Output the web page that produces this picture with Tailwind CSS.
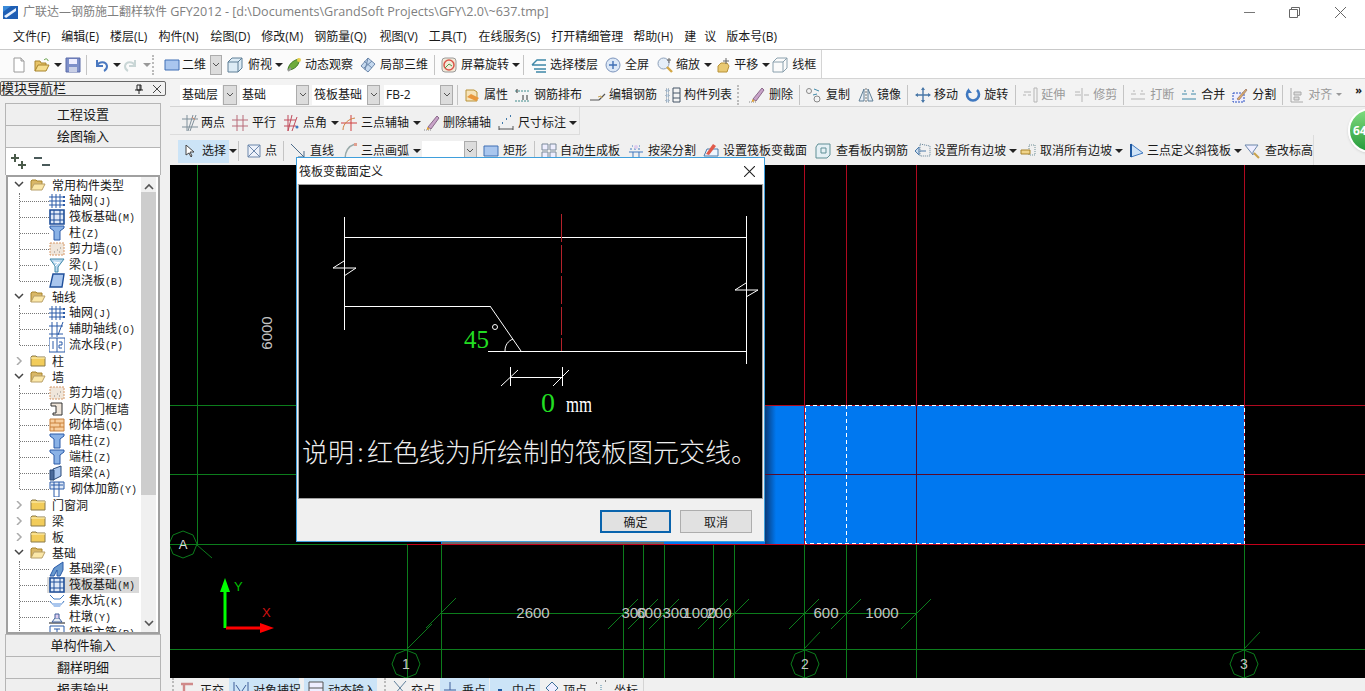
<!DOCTYPE html>
<html lang="zh">
<head>
    <meta charset="UTF-8">
    <title>GFY2012</title>
    <script src="https://cdn.jsdelivr.net/npm/@tailwindcss/browser@4"></script>
</head>
<body class="m-0 overflow-hidden bg-white">
<!-- icon sheet -->
<svg class="hidden" xmlns="http://www.w3.org/2000/svg">
    <symbol id="new" viewBox="0 0 16 16"><path d="M3 1h7l3 3v11H3z" fill="#fff" stroke="#9a9a9a"/><path d="M10 1v3h3" fill="#ddd" stroke="#9a9a9a"/></symbol>
    <symbol id="open" viewBox="0 0 16 16"><path d="M1 14V4h5l1 2h5v2" fill="#e8c468" stroke="#a8842c"/><path d="M1 14l3-6h11l-3 6z" fill="#f6dd8d" stroke="#a8842c"/><path d="M10 3c2-2 4-1 4 1" fill="none" stroke="#5a9a3a"/></symbol>
    <symbol id="save" viewBox="0 0 16 16"><path d="M1 1h14v14H1z" fill="#7d8fc9" stroke="#5a6aa8"/><path d="M4 2h8v5H4z" fill="#eef"/><path d="M4 10h8v5H4z" fill="#c9cfe6"/></symbol>
    <symbol id="undo" viewBox="0 0 16 16"><path d="M3 3v6h6" fill="none" stroke="#4a78c0" stroke-width="2"/><path d="M3 9c2-5 9-5 10 0 0 2-1 4-3 5" fill="none" stroke="#4a78c0" stroke-width="2"/></symbol>
    <symbol id="redo" viewBox="0 0 16 16"><path d="M13 3v6H7" fill="none" stroke="#c9d6d6" stroke-width="2"/><path d="M13 9C11 4 4 4 3 9c0 2 1 4 3 5" fill="none" stroke="#c9d6d6" stroke-width="2"/></symbol>
    <symbol id="rect" viewBox="0 0 16 16"><path d="M1 3h14v10H1z" fill="#a9c6ee" stroke="#3f6fb5"/></symbol>
    <symbol id="cube" viewBox="0 0 16 16"><path d="M1 5l4-4h10v10l-4 4H1z" fill="#dcebf5" stroke="#5f7f96"/><path d="M1 5h10v10M11 5l4-4" fill="none" stroke="#5f7f96"/></symbol>
    <symbol id="orbit" viewBox="0 0 16 16"><path d="M2 13c0-5 5-10 11-11 1 5-4 11-11 11z" fill="#6eab3c" stroke="#3f7a25"/><circle cx="13" cy="3" r="2" fill="#e8d04c"/><path d="M2 14l3-3" stroke="#999" stroke-width="2"/></symbol>
    <symbol id="part3d" viewBox="0 0 16 16"><path d="M8 1l7 6-7 8-7-6z" fill="#c5d9ef" stroke="#6b87ab"/><path d="M4 4l8 7M8 1l-3 12M12 4l-8 7" stroke="#6b87ab" fill="none"/></symbol>
    <symbol id="spin" viewBox="0 0 16 16"><rect x="1" y="1" width="14" height="14" rx="3" fill="#f3ead9" stroke="#9a9a9a"/><circle cx="8" cy="8" r="5" fill="none" stroke="#d9564a" stroke-width="1.5"/><path d="M4 11l4-4 3 2" stroke="#4a9a4a" fill="none"/></symbol>
    <symbol id="floors" viewBox="0 0 16 16"><path d="M1 8l5-5h9M1 8h14M3 12h12M5 15h10" fill="none" stroke="#3f88a8" stroke-width="1.4"/></symbol>
    <symbol id="full" viewBox="0 0 16 16"><circle cx="8" cy="8" r="7" fill="#dce8f7" stroke="#7d95bd"/><path d="M8 4v8M4 8h8" stroke="#3f6fb5" stroke-width="1.4"/></symbol>
    <symbol id="zoom" viewBox="0 0 16 16"><circle cx="6.500" cy="6.500" r="5.500" fill="#e5eef8" stroke="#8ea1ba"/><path d="M10 10l5 5" stroke="#d3a745" stroke-width="2.400"/><path d="M12 1v5M10 3h4" stroke="#666"/></symbol>
    <symbol id="pan" viewBox="0 0 16 16"><path d="M3 15V9l3-3h6l2 3-2 6z" fill="#e9c972" stroke="#b89238"/><path d="M11 1v6M8 4h6" stroke="#666"/></symbol>
    <symbol id="wire" viewBox="0 0 16 16"><path d="M1 5l4-4h10v10l-4 4H1zM1 5h10v10M11 5l4-4" fill="none" stroke="#8aa0ad"/></symbol>
    <symbol id="prop" viewBox="0 0 16 16"><path d="M1 3h8l3 2v9H1z" fill="#f6e3b8" stroke="#b89238"/><path d="M2 10l4-3 8 4-3 3z" fill="#e9973c"/></symbol>
    <symbol id="bars" viewBox="0 0 16 16"><path d="M1 4h14M1 14h14" stroke="#3f8a8a" stroke-dasharray="2 1"/><path d="M3 2v4M9 8v5M13 8v5" stroke="#333"/></symbol>
    <symbol id="edit" viewBox="0 0 16 16"><path d="M0 13h9M9 13l6-6" stroke="#555" stroke-width="1.200" fill="none"/><path d="M8 10l3-1 1 2" stroke="#c9a24c" fill="none"/></symbol>
    <symbol id="list" viewBox="0 0 16 16"><path d="M1 2h3v3H1zM1 7h3v3H1zM1 12h3v3H1z" fill="#cde" stroke="#789" stroke-dasharray="1 1"/><path d="M8 1h7v14H8zM8 6h7M8 11h7" fill="none" stroke="#456"/></symbol>
    <symbol id="erase" viewBox="0 0 16 16"><path d="M4 12L13 1l2 2-8 11z" fill="#c8a3c8" stroke="#8a6a8a"/><path d="M0 15h7" stroke="#888" stroke-dasharray="1 1"/><path d="M3 12l3 2-3 1z" fill="#e0a030"/></symbol>
    <symbol id="copy" viewBox="0 0 16 16"><circle cx="3" cy="4" r="2.500" fill="none" stroke="#888"/><circle cx="11" cy="12" r="3" fill="none" stroke="#888"/><path d="M8 2l5 2M7 8l4-1" stroke="#3f88a8"/></symbol>
    <symbol id="mirror" viewBox="0 0 16 16"><path d="M8 1v14" stroke="#777" stroke-dasharray="2 1"/><path d="M6 2v12H1zM10 2v12h5z" fill="#e8eef5" stroke="#5f7f96"/></symbol>
    <symbol id="move" viewBox="0 0 16 16"><path d="M8 1v14M1 8h14" stroke="#4a78a8" stroke-width="1.400"/><path d="M8 0l2 3H6zM8 16l2-3H6zM0 8l3-2v4zM16 8l-3-2v4z" fill="#4a78a8"/></symbol>
    <symbol id="rotate" viewBox="0 0 16 16"><path d="M4 3a6 6 0 1 0 8 0" fill="none" stroke="#3f78c0" stroke-width="2.600"/><path d="M3 1v5h4" fill="#3f78c0"/></symbol>
    <symbol id="extend" viewBox="0 0 16 16"><path d="M1 8h3M6 8h3M2 5h7M12 1v14h3V1z" fill="none" stroke="#b5b5b5"/></symbol>
    <symbol id="trim" viewBox="0 0 16 16"><path d="M1 8h6M10 8h5M1 5h5M8 1v14" fill="none" stroke="#b5b5b5"/></symbol>
    <symbol id="break" viewBox="0 0 16 16"><path d="M1 12h14M1 7h5M10 7h5M3 4h2M11 4h2" stroke="#b5b5b5" fill="none"/></symbol>
    <symbol id="merge" viewBox="0 0 16 16"><path d="M1 12h14M1 7h5M10 7h5M3 4h2M11 4h2" stroke="#3f88a8" fill="none"/></symbol>
    <symbol id="split" viewBox="0 0 16 16"><path d="M1 6h11v9H1z" fill="#eef" stroke="#2a50c0" stroke-dasharray="2 1"/><path d="M5 12L14 2l1 1-8 10z" fill="#e0b060" stroke="#a87"/></symbol>
    <symbol id="align" viewBox="0 0 16 16"><path d="M2 1v14h12" stroke="#aaa" fill="none"/><path d="M5 5h7v3H5zM5 10h5v3H5z" fill="#ddd" stroke="#aaa"/></symbol>
    <symbol id="two" viewBox="0 0 16 16"><path d="M0 4h16M0 12h16M5 0v16M11 0l-5 16M14 0l-6 16" stroke="#7f8f9a" fill="none"/><path d="M10 2l3 3" stroke="#d08a6a"/></symbol>
    <symbol id="para" viewBox="0 0 16 16"><path d="M0 5h16M0 11h16M5 0v16M11 0v16" stroke="#b86a78" fill="none"/></symbol>
    <symbol id="angle" viewBox="0 0 16 16"><path d="M0 5h12M0 11h12M4 0v16M8 0L4 16M13 2L8 16" stroke="#c04a5a" fill="none"/><circle cx="13" cy="12" r="1.500" fill="#3f78c0"/></symbol>
    <symbol id="arc" viewBox="0 0 16 16"><path d="M0 8h16M10 0v16" stroke="#d04040"/><path d="M2 15c0-6 5-11 12-12" stroke="#d08040" fill="none"/></symbol>
    <symbol id="dim" viewBox="0 0 16 16"><path d="M1 11v4M15 11v4M1 14h14" stroke="#555" fill="none"/><path d="M4 8h1M8 4h1M12 1h1" stroke="#3f78a8" stroke-width="2"/></symbol>
    <symbol id="point" viewBox="0 0 16 16"><path d="M2 2h12v12H2zM2 2l12 12M14 2L2 14" fill="#eef2fa" stroke="#6b87ab"/></symbol>
    <symbol id="line" viewBox="0 0 16 16"><path d="M1 1l13 13M14 8v6H8" stroke="#4a6a8a" fill="none"/></symbol>
    <symbol id="arc2" viewBox="0 0 16 16"><path d="M3 16C3 8 7 3 13 1" stroke="#9aa" stroke-width="1.500" fill="none"/><path d="M12 0h3v3h-3z" fill="#e0a090"/></symbol>
    <symbol id="auto" viewBox="0 0 16 16"><path d="M1 1h6v6H1zM9 1h6v6H9zM1 9h6v6H1zM9 9h6v6H9z" fill="#eef" stroke="#7a8a9a"/></symbol>
    <symbol id="beamcut" viewBox="0 0 16 16"><path d="M1 9h14M5 15V9M11 15V9" stroke="#3f78c0" fill="none"/><path d="M4 3h1M11 3h1M2 6h12" stroke="#3f78c0" stroke-dasharray="2 2"/><circle cx="8" cy="4" r="2" fill="#dce"/></symbol>
    <symbol id="cutsec" viewBox="0 0 16 16"><path d="M4 6h11v7H1z" fill="#eef6ff" stroke="#4a78a8"/><path d="M3 11l7-10 3 2-7 9z" fill="#e05a4a"/></symbol>
    <symbol id="viewbar" viewBox="0 0 16 16"><path d="M3 1h12v11l-3 3H1V4z" fill="#e5f0f5" stroke="#5f8f96"/><path d="M6 5h5v5H6z" fill="none" stroke="#5f8f96"/></symbol>
    <symbol id="slope" viewBox="0 0 16 16"><path d="M5 1l10 2v10H5z" fill="none" stroke="#5f7f96" stroke-dasharray="1 1"/><path d="M0 8l4-4v8zM5 8h6" fill="#cde" stroke="#4a78a8"/></symbol>
    <symbol id="unslope" viewBox="0 0 16 16"><path d="M9 2h6v10H9z" fill="none" stroke="#6f8f96" stroke-dasharray="1 1"/><path d="M1 7h9v4H1z" fill="#f0d48a" stroke="#a8842c"/></symbol>
    <symbol id="tri" viewBox="0 0 16 16"><path d="M3 1v13l12-4z" fill="#cfe3f7" stroke="#3f78c0"/><path d="M3 1v13" stroke="#1f58a0" stroke-width="2"/></symbol>
    <symbol id="elev" viewBox="0 0 16 16"><path d="M1 2h13L9 9v3z" fill="#eef" stroke="#6b87ab"/><path d="M10 10l5 5" stroke="#c9a24c" stroke-width="2"/></symbol>
    <symbol id="ortho" viewBox="0 0 16 16"><path d="M2 4h12M5 4v12" stroke="#d08a8a" stroke-width="2.400" fill="none"/></symbol>
    <symbol id="snap" viewBox="0 0 16 16"><path d="M1 2v14M15 2v14M3 5l4 6M13 5l-4 6" stroke="#3f5f9a" fill="none"/></symbol>
    <symbol id="dyn" viewBox="0 0 16 16"><path d="M1 2h14v14H1zM1 8h14" fill="#eef" stroke="#555"/></symbol>
    <symbol id="cross" viewBox="0 0 16 16"><path d="M2 1l12 14M14 1L2 15" stroke="#5f7f9a" fill="none"/></symbol>
    <symbol id="perp" viewBox="0 0 16 16"><path d="M8 2v8M2 10h12" stroke="#3f5f9a" fill="none"/></symbol>
    <symbol id="mid" viewBox="0 0 16 16"><path d="M6 9h4v4H6z" fill="#1f58a0"/></symbol>
    <symbol id="vert" viewBox="0 0 16 16"><path d="M8 2l6 6-6 6-6-6z" fill="#eef" stroke="#3f6f9a"/></symbol>
    <symbol id="coord" viewBox="0 0 16 16"><path d="M1 13h14M8 5v10" stroke="#4a88a8" stroke-dasharray="1 1"/><path d="M3 3h1M12 1h1" stroke="#888" stroke-width="2"/></symbol>
    <symbol id="folder-o" viewBox="0 0 16 16"><path d="M1 13V4l1-1h4l1 1h5v3" fill="#d9b767" stroke="#a8842c"/><path d="M1 13l3-6h11l-3 6z" fill="#fbe7a8" stroke="#b8a06a"/></symbol>
    <symbol id="folder-c" viewBox="0 0 16 16"><path d="M1 13V4l1-1h4l1 1h8v9z" fill="#f2cc5a" stroke="#8a7a4a"/><path d="M1 5h14" stroke="#fff3c0"/></symbol>
    <symbol id="t-grid" viewBox="0 0 16 16"><path d="M0 4h16M0 8h16M0 12h16M3 1v14M7 1v14M11 1v14" stroke="#2a5aa8" fill="none"/><path d="M14 3h2v2h-2zM14 7h2v2h-2zM14 11h2v2h-2z" fill="#2a5aa8"/></symbol>
    <symbol id="t-raft" viewBox="0 0 16 16"><path d="M1 1h14v14H1z" fill="#dfe9f7" stroke="#1f4f9a" stroke-width="1.600"/><path d="M5 1v14M11 1v14M1 5h14M1 11h14" stroke="#1f4f9a"/></symbol>
    <symbol id="t-col" viewBox="0 0 16 16"><path d="M1 1h14v2l-4 3v9H5V6L1 3z" fill="#8ab2e6" stroke="#2a5aa8"/></symbol>
    <symbol id="t-wall" viewBox="0 0 16 16"><path d="M1 2h14v12H1z" fill="#f0e6da" stroke="#d69a6a" stroke-dasharray="2 1"/><path d="M8 9l1 0M5 11h1M11 7h1M10 11h1" stroke="#888"/></symbol>
    <symbol id="t-beam" viewBox="0 0 16 16"><path d="M1 2h14L9 10v5H6V9z" fill="#bcd9f0" stroke="#3f88a8"/><path d="M5 5l6 1M6 9l4-4" stroke="#fff"/></symbol>
    <symbol id="t-slab" viewBox="0 0 16 16"><path d="M4 1h11l-2 13H1z" fill="#a9c6ee" stroke="#1f4f9a" stroke-width="1.400"/></symbol>
    <symbol id="t-aux" viewBox="0 0 16 16"><path d="M0 5h14M0 13h14M3 1v15M8 1v15M14 1L9 14" stroke="#2a5aa8" fill="none"/></symbol>
    <symbol id="t-flow" viewBox="0 0 16 16"><path d="M0 1h16v14H0zM8 1v14" fill="#fff" stroke="#2a5aa8"/><path d="M4 4v8M10 5h3v3h-3v3h3" stroke="#2a5aa8" fill="none"/></symbol>
    <symbol id="t-door" viewBox="0 0 16 16"><path d="M2 2h11v12H4v-2h3V5H2z" fill="#f0e6da" stroke="#333"/></symbol>
    <symbol id="t-brick" viewBox="0 0 16 16"><path d="M1 2h14v12H1z" fill="#f7cf9f" stroke="#c8803a"/><path d="M1 6h14M1 10h14M6 2v4M11 6v4M5 10v4" stroke="#c8803a"/></symbol>
    <symbol id="t-dark" viewBox="0 0 16 16"><path d="M4 4l8-3v10l-8 4z" fill="#a9c6ee" stroke="#2a4a78"/><path d="M1 5h4v10H1z" fill="#4a6a9a" stroke="#2a4a78"/></symbol>
    <symbol id="t-rein" viewBox="0 0 16 16"><path d="M1 1h14v7H1z" fill="#dfe9f7" stroke="#2a5aa8"/><path d="M5 1v15h5V1M2 4h12" stroke="#2a5aa8" fill="none"/></symbol>
    <symbol id="t-fbeam" viewBox="0 0 16 16"><path d="M1 15l4-8 9-6v8l-3 6H8V9l-3 6z" fill="#6a9ad0" stroke="#2a5aa8"/></symbol>
    <symbol id="t-pit" viewBox="0 0 16 16"><path d="M1 2l4 4h6l4-4M1 8c3 6 11 6 14 0" stroke="#3f78c0" fill="none"/><path d="M3 10h10l-2 4H5z" fill="#a9c6ee"/></symbol>
    <symbol id="t-pier" viewBox="0 0 16 16"><path d="M0 13h16v2H0z" fill="#8a8a8a"/><path d="M3 13l3-4h4l3 4z" fill="#e8eef5" stroke="#3f5f9a"/><path d="M6 9V5h4v4" fill="#dce" stroke="#3f5f9a"/></symbol>
    <symbol id="t-bar" viewBox="0 0 16 16"><path d="M1 1h14v14H1z" fill="#fff" stroke="#2a5aa8"/><path d="M5 4h6M8 4v8" stroke="#2a5aa8"/></symbol>
</svg>

<div class="relative h-[691px] w-[1365px] overflow-hidden flex flex-col text-[12px] text-[#1a1a1a] font-['Open_Sans','Noto_Sans_CJK_SC',sans-serif]">
    <!-- title bar -->
    <div class="h-6 shrink-0 flex items-center pl-[3px] bg-white">
        <svg class="w-[15px] h-[15px]" viewBox="0 0 15 15"><path d="M0 1h15v13H0z" fill="#1f5fb5"/><path d="M1 11L13 3v3L3 13z" fill="#e8f2ff"/><path d="M0 1h8L0 7z" fill="#3a8ad9"/></svg>
        <span class="ml-[5px] text-[12px] text-[#7f7f7f] whitespace-nowrap">广联达—钢筋施工翻样软件 <span class="text-[12.600px]">GFY2012 - [d:\Documents\GrandSoft Projects\GFY\2.0\~637.tmp]</span></span>
        <div class="ml-auto flex items-center">
            <svg class="w-[11px] h-[11px]" viewBox="0 0 11 11"><path d="M0 5.500h11" stroke="#777"/></svg>
            <svg class="ml-[34px] w-[11px] h-[11px]" viewBox="0 0 11 11"><path d="M.5 2.500h8v8h-8zM2.500 2.500v-2h8v8h-2" fill="none" stroke="#666"/></svg>
            <svg class="ml-[35px] mr-[19px] w-[11px] h-[11px]" viewBox="0 0 11 11"><path d="M0 0l11 11M11 0L0 11" stroke="#666"/></svg>
        </div>
    </div>
    <!-- menu bar -->
    <div class="h-[26px] shrink-0 border-b border-[#c9c9c9] flex items-center whitespace-nowrap bg-white">
        <span class="ml-[13px]">文件(F)</span><span class="ml-[11px]">编辑(E)</span><span class="ml-[11px]">楼层(L)</span><span class="ml-[11px]">构件(N)</span><span class="ml-[12px]">绘图(D)</span><span class="ml-[11px]">修改(M)</span><span class="ml-[11px]">钢筋量(Q)</span><span class="ml-[13px]">视图(V)</span><span class="ml-[11px]">工具(T)</span><span class="ml-[12px]">在线服务(S)</span><span class="ml-[11px]">打开精细管理</span><span class="ml-[10px]">帮助(H)</span><span class="ml-[11px]">建</span><span class="ml-2">议</span><span class="ml-[10px]">版本号(B)</span>
    </div>
    <!-- toolbar 1 -->
    <div class="h-[29px] shrink-0 flex items-center whitespace-nowrap border-b border-[#d4d4d4] bg-white">
        <div class="h-full w-[822px] pt-[2px] flex items-center border-r border-[#d4d4d4] bg-[#fbfbfb]">
            <svg class="ml-[11px] w-4 h-4"><use href="#new"/></svg>
            <svg class="ml-[7px] w-4 h-4"><use href="#open"/></svg>
            <i class="ml-1 border-x-4 border-t-4 border-x-transparent border-t-[#222]"></i>
            <svg class="ml-[3px] w-4 h-4"><use href="#save"/></svg>
            <i class="ml-[5px] w-px h-5 bg-[#c4c4c4]"></i>
            <svg class="ml-[7px] w-4 h-4"><use href="#undo"/></svg>
            <i class="ml-[3px] border-x-4 border-t-4 border-x-transparent border-t-[#222]"></i>
            <svg class="ml-px w-4 h-4"><use href="#redo"/></svg>
            <i class="ml-[5px] border-x-4 border-t-4 border-x-transparent border-t-[#999]"></i>
            <i class="ml-px w-[2px] h-5 border-l-2 border-dotted border-[#bbb]"></i>
            <svg class="ml-[10px] w-4 h-4"><use href="#rect"/></svg>
            <span class="ml-[2px]">二维</span>
            <span class="ml-1 w-3 h-5 flex items-center justify-center bg-[#dcdcdc] border border-[#acacac]"><svg class="w-2 h-2" viewBox="0 0 8 8"><path d="M1 2l3 3 3-3" fill="none" stroke="#555"/></svg></span>
            <svg class="ml-[5px] w-4 h-4"><use href="#cube"/></svg>
            <span class="ml-[5px]">俯视</span>
            <i class="ml-[3px] border-x-4 border-t-4 border-x-transparent border-t-[#222]"></i>
            <svg class="ml-[3px] w-4 h-4"><use href="#orbit"/></svg>
            <span class="ml-[3px]">动态观察</span>
            <svg class="ml-[7px] w-4 h-4"><use href="#part3d"/></svg>
            <span class="ml-1">局部三维</span>
            <i class="ml-[6px] w-px h-5 bg-[#c4c4c4]"></i>
            <svg class="ml-[6px] w-4 h-4"><use href="#spin"/></svg>
            <span class="ml-1">屏幕旋转</span>
            <i class="ml-[3px] border-x-4 border-t-4 border-x-transparent border-t-[#222]"></i>
            <i class="ml-[3px] w-px h-5 bg-[#c4c4c4]"></i>
            <svg class="ml-[7px] w-4 h-4"><use href="#floors"/></svg>
            <span class="ml-[3px]">选择楼层</span>
            <svg class="ml-[7px] w-4 h-4"><use href="#full"/></svg>
            <span class="ml-1">全屏</span>
            <svg class="ml-2 w-4 h-4"><use href="#zoom"/></svg>
            <span class="ml-[3px]">缩放</span>
            <i class="ml-1 border-x-4 border-t-4 border-x-transparent border-t-[#222]"></i>
            <svg class="ml-[3px] w-4 h-4"><use href="#pan"/></svg>
            <span class="ml-[3px]">平移</span>
            <i class="ml-1 border-x-4 border-t-4 border-x-transparent border-t-[#222]"></i>
            <svg class="ml-[2px] w-4 h-4"><use href="#wire"/></svg>
            <span class="ml-1">线框</span>
        </div>
    </div>

    <div class="flex-1 flex min-h-0">
        <!-- module navigator -->
        <aside class="w-[170px] shrink-0 bg-[#f0f0f0] flex flex-col overflow-hidden">
            <div class="mt-[2px] h-[15px] w-[166px] shrink-0 flex items-center border border-[#666] rounded-[2px] text-[13px] whitespace-nowrap">
                <span>模块导航栏</span>
                <svg class="ml-auto w-[10px] h-[10px]" viewBox="0 0 10 10"><path d="M3 1h4v5H3zM1 6h8M5 6v4M6 1v5" fill="none" stroke="#222"/></svg>
                <svg class="ml-[9px] mr-[4px] w-[8px] h-[8px]" viewBox="0 0 8 8"><path d="M0 0l8 8M8 0L0 8" stroke="#444"/></svg>
            </div>
            <div class="ml-[5px] mt-[7px] w-[156px] h-[23px] shrink-0 flex items-center justify-center border border-[#b5b5b5] bg-[#efefef] text-[13px]">工程设置</div>
            <div class="ml-[5px] w-[156px] h-[22px] pt-px shrink-0 flex items-center justify-center border border-t-0 border-[#b5b5b5] bg-[#efefef] text-[13px]">绘图输入</div>
            <div class="ml-[5px] w-[156px] h-[27px] shrink-0 flex items-center bg-white border-x border-[#b5b5b5]">
                <svg class="ml-[5px] w-4 h-4" viewBox="0 0 16 16"><path d="M4 0v8M0 4h8M11 7v8M7 11h8" stroke="#4a5a4a" stroke-width="2"/></svg>
                <svg class="ml-[7px] w-4 h-4" viewBox="0 0 16 16"><path d="M0 4h8M8 11h8" stroke="#4a5a5a" stroke-width="2"/></svg>
            </div>
            <!-- tree -->
            <div class="ml-[6px] w-[154px] h-[459px] shrink-0 relative bg-white border-2 border-[#a0a0a0] overflow-hidden">
                <div class="absolute right-[2px] top-0 bottom-0 w-[15px] bg-[#f0f0f0]">
                    <svg class="mx-auto mt-[6px] w-[10px] h-[7px]" viewBox="0 0 10 7"><path d="M1 6l4-4 4 4" fill="none" stroke="#555" stroke-width="1.600"/></svg>
                    <div class="mt-[2px] h-[303px] bg-[#cdcdcd]"></div>
                    <svg class="absolute left-[3px] bottom-[5px] w-[10px] h-[7px]" viewBox="0 0 10 7"><path d="M1 1l4 4 4-4" fill="none" stroke="#555" stroke-width="1.600"/></svg>
                </div>
                <div class="w-[150px] -ml-[8px] font-['Noto_Sans_CJK_SC',sans-serif] leading-4 whitespace-nowrap">
                    <!-- 常用构件类型 -->
                    <div class="relative">
                        <i class="absolute left-[19px] top-4 bottom-2 border-l border-dotted border-[#777]"></i>
                        <div class="h-4 flex items-center"><svg class="ml-[14px] w-[10px] h-2" viewBox="0 0 10 8"><path d="M1 1l4 4 4-4" fill="none" stroke="#444" stroke-width="1.500"/></svg><svg class="ml-[6px] w-4 h-4"><use href="#folder-o"/></svg><span class="ml-[6px]">常用构件类型</span></div>
                        <div class="h-4 flex items-center pl-5"><i class="w-[29px] border-b border-dotted border-[#777]"></i><svg class="w-4 h-4"><use href="#t-grid"/></svg><span class="ml-1">轴网<span class="font-['Liberation_Mono'] text-[10px]">(J)</span></span></div>
                        <div class="h-4 flex items-center pl-5"><i class="w-[29px] border-b border-dotted border-[#777]"></i><svg class="w-4 h-4"><use href="#t-raft"/></svg><span class="ml-1">筏板基础<span class="font-['Liberation_Mono'] text-[10px]">(M)</span></span></div>
                        <div class="h-4 flex items-center pl-5"><i class="w-[29px] border-b border-dotted border-[#777]"></i><svg class="w-4 h-4"><use href="#t-col"/></svg><span class="ml-1">柱<span class="font-['Liberation_Mono'] text-[10px]">(Z)</span></span></div>
                        <div class="h-4 flex items-center pl-5"><i class="w-[29px] border-b border-dotted border-[#777]"></i><svg class="w-4 h-4"><use href="#t-wall"/></svg><span class="ml-1">剪力墙<span class="font-['Liberation_Mono'] text-[10px]">(Q)</span></span></div>
                        <div class="h-4 flex items-center pl-5"><i class="w-[29px] border-b border-dotted border-[#777]"></i><svg class="w-4 h-4"><use href="#t-beam"/></svg><span class="ml-1">梁<span class="font-['Liberation_Mono'] text-[10px]">(L)</span></span></div>
                        <div class="h-4 flex items-center pl-5"><i class="w-[29px] border-b border-dotted border-[#777]"></i><svg class="w-4 h-4"><use href="#t-slab"/></svg><span class="ml-1">现浇板<span class="font-['Liberation_Mono'] text-[10px]">(B)</span></span></div>
                    </div>
                    <!-- 轴线 -->
                    <div class="relative">
                        <i class="absolute left-[19px] top-4 bottom-2 border-l border-dotted border-[#777]"></i>
                        <div class="h-4 flex items-center"><svg class="ml-[14px] w-[10px] h-2" viewBox="0 0 10 8"><path d="M1 1l4 4 4-4" fill="none" stroke="#444" stroke-width="1.500"/></svg><svg class="ml-[6px] w-4 h-4"><use href="#folder-o"/></svg><span class="ml-[6px]">轴线</span></div>
                        <div class="h-4 flex items-center pl-5"><i class="w-[29px] border-b border-dotted border-[#777]"></i><svg class="w-4 h-4"><use href="#t-grid"/></svg><span class="ml-1">轴网<span class="font-['Liberation_Mono'] text-[10px]">(J)</span></span></div>
                        <div class="h-4 flex items-center pl-5"><i class="w-[29px] border-b border-dotted border-[#777]"></i><svg class="w-4 h-4"><use href="#t-aux"/></svg><span class="ml-1">辅助轴线<span class="font-['Liberation_Mono'] text-[10px]">(O)</span></span></div>
                        <div class="h-4 flex items-center pl-5"><i class="w-[29px] border-b border-dotted border-[#777]"></i><svg class="w-4 h-4"><use href="#t-flow"/></svg><span class="ml-1">流水段<span class="font-['Liberation_Mono'] text-[10px]">(P)</span></span></div>
                    </div>
                    <div class="h-4 flex items-center"><svg class="ml-[14px] w-[10px] h-2" viewBox="0 0 10 8"><path d="M3 0l4 4-4 4" fill="none" stroke="#aaa" stroke-width="1.500"/></svg><svg class="ml-[6px] w-4 h-4"><use href="#folder-c"/></svg><span class="ml-[6px]">柱</span></div>
                    <!-- 墙 -->
                    <div class="relative">
                        <i class="absolute left-[19px] top-4 bottom-2 border-l border-dotted border-[#777]"></i>
                        <div class="h-4 flex items-center"><svg class="ml-[14px] w-[10px] h-2" viewBox="0 0 10 8"><path d="M1 1l4 4 4-4" fill="none" stroke="#444" stroke-width="1.500"/></svg><svg class="ml-[6px] w-4 h-4"><use href="#folder-o"/></svg><span class="ml-[6px]">墙</span></div>
                        <div class="h-4 flex items-center pl-5"><i class="w-[29px] border-b border-dotted border-[#777]"></i><svg class="w-4 h-4"><use href="#t-wall"/></svg><span class="ml-1">剪力墙<span class="font-['Liberation_Mono'] text-[10px]">(Q)</span></span></div>
                        <div class="h-4 flex items-center pl-5"><i class="w-[29px] border-b border-dotted border-[#777]"></i><svg class="w-4 h-4"><use href="#t-door"/></svg><span class="ml-1">人防门框墙</span></div>
                        <div class="h-4 flex items-center pl-5"><i class="w-[29px] border-b border-dotted border-[#777]"></i><svg class="w-4 h-4"><use href="#t-brick"/></svg><span class="ml-1">砌体墙<span class="font-['Liberation_Mono'] text-[10px]">(Q)</span></span></div>
                        <div class="h-4 flex items-center pl-5"><i class="w-[29px] border-b border-dotted border-[#777]"></i><svg class="w-4 h-4"><use href="#t-col"/></svg><span class="ml-1">暗柱<span class="font-['Liberation_Mono'] text-[10px]">(Z)</span></span></div>
                        <div class="h-4 flex items-center pl-5"><i class="w-[29px] border-b border-dotted border-[#777]"></i><svg class="w-4 h-4"><use href="#t-col"/></svg><span class="ml-1">端柱<span class="font-['Liberation_Mono'] text-[10px]">(Z)</span></span></div>
                        <div class="h-4 flex items-center pl-5"><i class="w-[29px] border-b border-dotted border-[#777]"></i><svg class="w-4 h-4"><use href="#t-dark"/></svg><span class="ml-1">暗梁<span class="font-['Liberation_Mono'] text-[10px]">(A)</span></span></div>
                        <div class="h-4 flex items-center pl-5"><i class="w-[29px] border-b border-dotted border-[#777]"></i><svg class="w-4 h-4"><use href="#t-rein"/></svg><span class="ml-[6px]">砌体加筋<span class="font-['Liberation_Mono'] text-[10px]">(Y)</span></span></div>
                    </div>
                    <div class="h-4 flex items-center"><svg class="ml-[14px] w-[10px] h-2" viewBox="0 0 10 8"><path d="M3 0l4 4-4 4" fill="none" stroke="#aaa" stroke-width="1.500"/></svg><svg class="ml-[6px] w-4 h-4"><use href="#folder-c"/></svg><span class="ml-[6px]">门窗洞</span></div>
                    <div class="h-4 flex items-center"><svg class="ml-[14px] w-[10px] h-2" viewBox="0 0 10 8"><path d="M3 0l4 4-4 4" fill="none" stroke="#aaa" stroke-width="1.500"/></svg><svg class="ml-[6px] w-4 h-4"><use href="#folder-c"/></svg><span class="ml-[6px]">梁</span></div>
                    <div class="h-4 flex items-center"><svg class="ml-[14px] w-[10px] h-2" viewBox="0 0 10 8"><path d="M3 0l4 4-4 4" fill="none" stroke="#aaa" stroke-width="1.500"/></svg><svg class="ml-[6px] w-4 h-4"><use href="#folder-c"/></svg><span class="ml-[6px]">板</span></div>
                    <!-- 基础 -->
                    <div class="relative">
                        <i class="absolute left-[19px] top-4 bottom-2 border-l border-dotted border-[#777]"></i>
                        <div class="h-4 flex items-center"><svg class="ml-[14px] w-[10px] h-2" viewBox="0 0 10 8"><path d="M1 1l4 4 4-4" fill="none" stroke="#444" stroke-width="1.500"/></svg><svg class="ml-[6px] w-4 h-4"><use href="#folder-o"/></svg><span class="ml-[6px]">基础</span></div>
                        <div class="h-4 flex items-center pl-5"><i class="w-[29px] border-b border-dotted border-[#777]"></i><svg class="w-4 h-4"><use href="#t-fbeam"/></svg><span class="ml-1">基础梁<span class="font-['Liberation_Mono'] text-[10px]">(F)</span></span></div>
                        <div class="h-4 flex items-center pl-5"><i class="w-[27px] shrink-0 border-b border-dotted border-[#777]"></i><span class="h-4 flex items-center bg-[#d9d9d9] w-[92px] shrink-0 pl-[2px]"><svg class="w-4 h-4 shrink-0"><use href="#t-raft"/></svg><span class="ml-1">筏板基础<span class="font-['Liberation_Mono'] text-[10px]">(M)</span></span></span></div>
                        <div class="h-4 flex items-center pl-5"><i class="w-[29px] border-b border-dotted border-[#777]"></i><svg class="w-4 h-4"><use href="#t-pit"/></svg><span class="ml-1">集水坑<span class="font-['Liberation_Mono'] text-[10px]">(K)</span></span></div>
                        <div class="h-4 flex items-center pl-5"><i class="w-[29px] border-b border-dotted border-[#777]"></i><svg class="w-4 h-4"><use href="#t-pier"/></svg><span class="ml-1">柱墩<span class="font-['Liberation_Mono'] text-[10px]">(Y)</span></span></div>
                        <div class="h-4 flex items-center pl-5"><i class="w-[29px] border-b border-dotted border-[#777]"></i><svg class="w-4 h-4"><use href="#t-bar"/></svg><span class="ml-1">筏板主筋<span class="font-['Liberation_Mono'] text-[10px]">(R)</span></span></div>
                    </div>
                </div>
            </div>
            <div class="ml-[5px] w-[156px] h-[23px] shrink-0 flex items-center justify-center border border-[#b5b5b5] bg-[#efefef] text-[13px]">单构件输入</div>
            <div class="ml-[5px] w-[156px] h-[22px] shrink-0 flex items-center justify-center border border-t-0 border-[#b5b5b5] bg-[#efefef] text-[13px]">翻样明细</div>
            <div class="ml-[5px] w-[156px] h-[22px] shrink-0 flex items-center justify-center border border-t-0 border-[#b5b5b5] bg-[#efefef] text-[13px]">报表输出</div>
        </aside>

        <main class="flex-1 min-w-0 flex flex-col bg-[#f0f0f0]">
            <!-- toolbar 2 -->
            <div class="h-[28px] pt-1 shrink-0 flex items-center whitespace-nowrap border-b border-[#d4d4d4] bg-[#f3f3f3]">
                <span class="ml-[10px] w-[42px] h-5 flex items-center pl-[2px] bg-white">基础层</span>
                <span class="ml-px w-[14px] h-5 flex items-center justify-center bg-[#dcdcdc] border border-[#acacac]"><svg class="w-2 h-2" viewBox="0 0 8 8"><path d="M1 2l3 3 3-3" fill="none" stroke="#555"/></svg></span>
                <span class="ml-[3px] w-[56px] h-5 flex items-center pl-[2px] bg-white">基础</span>
                <span class="w-[13px] h-5 flex items-center justify-center bg-[#dcdcdc] border border-[#acacac]"><svg class="w-2 h-2" viewBox="0 0 8 8"><path d="M1 2l3 3 3-3" fill="none" stroke="#555"/></svg></span>
                <span class="ml-[3px] w-[55px] h-5 flex items-center pl-[2px] bg-white">筏板基础</span>
                <span class="w-[13px] h-5 flex items-center justify-center bg-[#dcdcdc] border border-[#acacac]"><svg class="w-2 h-2" viewBox="0 0 8 8"><path d="M1 2l3 3 3-3" fill="none" stroke="#555"/></svg></span>
                <span class="ml-1 w-[56px] h-5 flex items-center pl-[2px] bg-white">FB-2</span>
                <span class="w-[13px] h-5 flex items-center justify-center bg-[#dcdcdc] border border-[#acacac]"><svg class="w-2 h-2" viewBox="0 0 8 8"><path d="M1 2l3 3 3-3" fill="none" stroke="#555"/></svg></span>
                <i class="ml-1 w-px h-5 bg-[#c4c4c4]"></i>
                <svg class="ml-[7px] w-4 h-4"><use href="#prop"/></svg><span class="ml-[3px]">属性</span>
                <svg class="ml-[6px] w-4 h-4"><use href="#bars"/></svg><span class="ml-1">钢筋排布</span>
                <svg class="ml-2 w-4 h-4"><use href="#edit"/></svg><span class="ml-[3px]">编辑钢筋</span>
                <svg class="ml-2 w-4 h-4"><use href="#list"/></svg><span class="ml-[3px]">构件列表</span>
                <i class="ml-[5px] w-[2px] h-5 border-l-2 border-dotted border-[#bbb]"></i>
                <svg class="ml-[10px] w-4 h-4"><use href="#erase"/></svg><span class="ml-1">删除</span>
                <i class="ml-[6px] w-px h-5 bg-[#c4c4c4]"></i>
                <svg class="ml-[6px] w-4 h-4"><use href="#copy"/></svg><span class="ml-1">复制</span>
                <svg class="ml-2 w-4 h-4"><use href="#mirror"/></svg><span class="ml-[3px]">镜像</span>
                <i class="ml-[6px] w-px h-5 bg-[#c4c4c4]"></i>
                <svg class="ml-[7px] w-4 h-4"><use href="#move"/></svg><span class="ml-[3px]">移动</span>
                <svg class="ml-[7px] w-4 h-4"><use href="#rotate"/></svg><span class="ml-[3px]">旋转</span>
                <i class="ml-[7px] w-px h-5 bg-[#c4c4c4]"></i>
                <svg class="ml-[6px] w-4 h-4"><use href="#extend"/></svg><span class="ml-[3px] text-[#9a9a9a]">延伸</span>
                <svg class="ml-[9px] w-4 h-4"><use href="#trim"/></svg><span class="ml-[3px] text-[#9a9a9a]">修剪</span>
                <i class="ml-[6px] w-px h-5 bg-[#c4c4c4]"></i>
                <svg class="ml-[6px] w-4 h-4"><use href="#break"/></svg><span class="ml-1 text-[#9a9a9a]">打断</span>
                <svg class="ml-[7px] w-4 h-4"><use href="#merge"/></svg><span class="ml-1">合并</span>
                <svg class="ml-[7px] w-4 h-4"><use href="#split"/></svg><span class="ml-1">分割</span>
                <i class="ml-[6px] w-px h-5 bg-[#c4c4c4]"></i>
                <svg class="ml-[6px] w-4 h-4"><use href="#align"/></svg><span class="ml-[3px] text-[#9a9a9a]">对齐</span>
                <i class="ml-1 border-x-[3px] border-t-[3px] border-x-transparent border-t-[#999]"></i>
                <span class="ml-[13px] -mt-[9px] text-[11px] font-bold">»</span>
            </div>
            <!-- toolbar 3 -->
            <div class="h-[28px] shrink-0 flex items-center whitespace-nowrap">
                <div class="h-full w-[410px] pt-1 flex items-center border-r border-b border-[#dcdcdc]">
                    <svg class="ml-3 w-4 h-4"><use href="#two"/></svg><span class="ml-[3px]">两点</span>
                    <svg class="ml-[7px] w-4 h-4"><use href="#para"/></svg><span class="ml-1">平行</span>
                    <svg class="ml-2 w-4 h-4"><use href="#angle"/></svg><span class="ml-[3px]">点角</span>
                    <i class="ml-1 border-x-4 border-t-4 border-x-transparent border-t-[#222]"></i>
                    <svg class="ml-[2px] w-4 h-4"><use href="#arc"/></svg><span class="ml-1">三点辅轴</span>
                    <i class="ml-1 border-x-4 border-t-4 border-x-transparent border-t-[#222]"></i>
                    <svg class="ml-[3px] w-4 h-4"><use href="#erase"/></svg><span class="ml-[3px]">删除辅轴</span>
                    <svg class="ml-[7px] w-4 h-4"><use href="#dim"/></svg><span class="ml-1">尺寸标注</span>
                    <i class="ml-[3px] border-x-4 border-t-4 border-x-transparent border-t-[#222]"></i>
                </div>
            </div>
            <!-- toolbar 4 -->
            <div class="h-[30px] shrink-0 flex items-center whitespace-nowrap">
                <div class="h-full w-[1144px] pt-[2px] flex items-center border-r border-[#dcdcdc]">
                    <span class="ml-2 w-[51px] h-[23px] flex items-center bg-[#cce4f7] shrink-0"><svg class="ml-[6px] w-3 h-3" viewBox="0 0 12 12"><path d="M2 0v10l3-2 2 4 1-1-2-4h4z" fill="#fff" stroke="#444"/></svg><span class="ml-[6px]">选择</span></span>
                    <i class="border-x-4 border-t-4 border-x-transparent border-t-[#222]"></i>
                    <i class="ml-px w-px h-5 bg-[#c4c4c4]"></i>
                    <svg class="ml-[7px] w-4 h-4"><use href="#point"/></svg><span class="ml-[3px]">点</span>
                    <i class="ml-[6px] w-px h-5 bg-[#c4c4c4]"></i>
                    <svg class="ml-[6px] w-4 h-4"><use href="#line"/></svg><span class="ml-1">直线</span>
                    <svg class="ml-2 w-4 h-4"><use href="#arc2"/></svg><span class="ml-[3px]">三点画弧</span>
                    <i class="ml-1 border-x-4 border-t-4 border-x-transparent border-t-[#222]"></i>
                    <span class="ml-px w-[42px] h-5 bg-white"></span>
                    <span class="w-[13px] h-5 flex items-center justify-center bg-[#dcdcdc] border border-[#acacac]"><svg class="w-2 h-2" viewBox="0 0 8 8"><path d="M1 2l3 3 3-3" fill="none" stroke="#555"/></svg></span>
                    <svg class="ml-[6px] w-4 h-4"><use href="#rect"/></svg><span class="ml-1">矩形</span>
                    <i class="ml-[7px] w-px h-5 bg-[#c4c4c4]"></i>
                    <svg class="ml-[6px] w-4 h-4"><use href="#auto"/></svg><span class="ml-[3px]">自动生成板</span>
                    <svg class="ml-2 w-4 h-4"><use href="#beamcut"/></svg><span class="ml-1">按梁分割</span>
                    <svg class="ml-[7px] w-4 h-4"><use href="#cutsec"/></svg><span class="ml-1">设置筏板变截面</span>
                    <svg class="ml-2 w-4 h-4"><use href="#viewbar"/></svg><span class="ml-[5px]">查看板内钢筋</span>
                    <svg class="ml-[7px] w-4 h-4"><use href="#slope"/></svg><span class="ml-[3px]">设置所有边坡</span>
                    <i class="ml-[3px] border-x-4 border-t-4 border-x-transparent border-t-[#222]"></i>
                    <svg class="ml-[3px] w-4 h-4"><use href="#unslope"/></svg><span class="ml-1">取消所有边坡</span>
                    <i class="ml-[3px] border-x-4 border-t-4 border-x-transparent border-t-[#222]"></i>
                    <svg class="ml-[5px] w-4 h-4"><use href="#tri"/></svg><span class="ml-[3px]">三点定义斜筏板</span>
                    <i class="ml-[3px] border-x-4 border-t-4 border-x-transparent border-t-[#222]"></i>
                    <svg class="ml-[2px] w-4 h-4"><use href="#elev"/></svg><span class="ml-[5px]">查改标高</span>
                </div>
            </div>
            <!-- drawing canvas -->
            <div class="flex-1 min-h-0 bg-black overflow-hidden">
                <svg class="block w-full h-full" viewBox="170 165 1195 513" font-family="Liberation Sans" fill="#c4c4c4" font-size="15">
                    <defs><linearGradient id="shade" x1="0" x2="1" y1="0" y2="0"><stop offset="0" stop-color="#0a3a78"/><stop offset="1" stop-color="#0078f0"/></linearGradient></defs>
                    <path d="M441 405H1244V544H441z" fill="#0078f0"/>
                    <path d="M765 405H776V544H765z" fill="url(#shade)"/>
                    <path d="M442 542H664V544H442z" fill="#6a6a6a"/>
                    <g stroke="#0c7c1c" fill="none" shape-rendering="crispEdges">
                        <path d="M197.500 165V545M170 405.500H441M170 474.500H441M170 544.500H407"/>
                        <path d="M407.500 545V678M441.500 545V678M623.500 545V678M643.500 545V678M664.500 545V678M713.500 545V678M734.500 545V678M804.500 545V678M846.500 545V678M916.500 545V678M1244.500 545V678"/>
                        <path d="M441 613.500H917M170 649.500H1365"/>
                    </g>
                    <g stroke="#0c7c1c" fill="none">
                        <path d="M197 545L212 558M426 628L456 598M407 649L432 624M608 629L638 599M628 629L658 599M649 629L679 599M698 629L728 599M719 629L749 599M789 629L819 599M831 629L861 599M901 629L931 599M804 649L820 632M1244 649L1260 632"/>
                        <path d="M183 531l10 4 4 9-4 10-10 4-10-4-4-10 4-9z"/>
                        <path d="M406 650l10 4 4 10-4 10-10 4-10-4-4-10 4-10z"/>
                        <path d="M805 650l10 4 4 10-4 10-10 4-10-4-4-10 4-10z"/>
                        <path d="M1244 650l10 4 4 10-4 10-10 4-10-4-4-10 4-10z"/>
                    </g>
                    <g stroke="#b00a20" fill="none" shape-rendering="crispEdges">
                        <path d="M804.500 165V544M846.500 165V405M916.500 165V405M1244.500 165V544"/>
                        <path d="M441 405.500H1365M1244 474.500H1365"/>
                    </g>
                    <path d="M407 544.500H1365" stroke="#c4001a" fill="none" shape-rendering="crispEdges"/>
                    <path d="M916.500 405V544M765 474.500H1244" stroke="#5a0a2a" fill="none" shape-rendering="crispEdges"/>
                    <path d="M805.500 405.500H1244.500V543.500H805.500zM846.500 405V544" fill="none" stroke="#fff" stroke-dasharray="4 3" shape-rendering="crispEdges"/>
                    <path d="M225 628V592" stroke="#00ff00" stroke-width="3"/>
                    <path d="M225 578l5 14h-10z" fill="#00ff00"/>
                    <path d="M226 628H262" stroke="#ff0000" stroke-width="3"/>
                    <path d="M274 628l-14-5v10z" fill="#ff0000"/>
                    <text x="234" y="591" fill="#00c000" font-size="13">Y</text>
                    <text x="262" y="617" fill="#d01010" font-size="13">X</text>
                    <text x="533" y="618" text-anchor="middle">2600</text>
                    <text x="634" y="618" text-anchor="middle">300</text>
                    <text x="649" y="618" text-anchor="middle">600</text>
                    <text x="675" y="618" text-anchor="middle">300</text>
                    <text x="700" y="618" text-anchor="middle">1000</text>
                    <text x="719" y="618" text-anchor="middle">200</text>
                    <text x="826" y="618" text-anchor="middle">600</text>
                    <text x="882" y="618" text-anchor="middle">1000</text>
                    <text x="606" y="690" text-anchor="middle">7200</text>
                    <text x="1023" y="690" text-anchor="middle">4000</text>
                    <text transform="translate(272 333) rotate(-90)" text-anchor="middle">6000</text>
                    <text x="183" y="549" text-anchor="middle" font-size="13" fill="#ddd">A</text>
                    <text x="406" y="669" text-anchor="middle" font-size="14">1</text>
                    <text x="805" y="669" text-anchor="middle" font-size="14">2</text>
                    <text x="1244" y="669" text-anchor="middle" font-size="14">3</text>
                </svg>
            </div>
            <!-- snap bar -->
            <div class="h-[13px] shrink-0 overflow-hidden flex items-start whitespace-nowrap bg-[#f0f0f0]">
                <i class="ml-[2px] w-[2px] h-4 border-l-2 border-dotted border-[#bbb]"></i>
                <svg class="ml-[5px] mt-[2px] w-4 h-4"><use href="#ortho"/></svg><span class="ml-[5px] mt-[4px]">正交</span>
                <span class="ml-[5px] w-[70px] h-4 pl-1 flex items-start bg-[#cce4f7]"><svg class="mt-[2px] w-4 h-4 shrink-0"><use href="#snap"/></svg><span class="ml-1 mt-[4px]">对象捕捉</span></span>
                <span class="ml-[5px] w-[73px] h-4 pl-1 flex items-start bg-[#cce4f7]"><svg class="mt-[2px] w-4 h-4 shrink-0"><use href="#dyn"/></svg><span class="ml-1 mt-[4px]">动态输入</span></span>
                <i class="ml-[7px] w-[2px] h-4 border-l-2 border-dotted border-[#bbb]"></i>
                <svg class="ml-[6px] mt-[2px] w-4 h-4"><use href="#cross"/></svg><span class="ml-[3px] mt-[4px]">交点</span>
                <span class="ml-[5px] w-[49px] h-4 flex items-start bg-[#cce4f7]"><svg class="ml-[2px] mt-[2px] w-4 h-4 shrink-0"><use href="#perp"/></svg><span class="ml-1 mt-[4px]">垂点</span></span>
                <span class="ml-px w-[50px] h-4 flex items-start bg-[#cce4f7]"><svg class="ml-[2px] mt-[2px] w-4 h-4 shrink-0"><use href="#mid"/></svg><span class="ml-1 mt-[4px]">中点</span></span>
                <svg class="ml-1 mt-[2px] w-4 h-4"><use href="#vert"/></svg><span class="ml-[3px] mt-[4px]">顶点</span>
                <svg class="ml-[6px] mt-[2px] w-4 h-4"><use href="#coord"/></svg><span class="ml-[5px] mt-[4px]">坐标</span>
                <i class="ml-[5px] w-px h-4 bg-[#d4d4d4]"></i>
            </div>
        </main>
    </div>

    <!-- status orb -->
    <div class="absolute left-[1348px] top-[108px] w-[45px] h-[45px] rounded-full border-2 border-white bg-gradient-to-b from-[#7fdc7f] to-[#1f9a3a] shadow flex items-center pl-[3px] text-[12px] font-bold text-white">64</div>

    <!-- 筏板变截面定义 dialog -->
    <div class="absolute left-[296px] top-[157px] w-[469px] h-[385px] flex flex-col border border-[#3f9fdc] bg-[#f0f0f0]">
        <div class="h-[26px] shrink-0 flex items-center bg-white pl-[2px] font-['Noto_Sans_CJK_SC',sans-serif]">
            <span>筏板变截面定义</span>
            <svg class="ml-auto mr-[9px] w-[11px] h-[11px]" viewBox="0 0 11 11"><path d="M0 0l11 11M11 0L0 11" stroke="#222" stroke-width="1.100"/></svg>
        </div>
        <div class="mx-px h-[315px] shrink-0 relative bg-black border border-[#a0a0a0]">
            <svg class="block w-full h-[245px]" viewBox="299 185 463 245" font-family="Liberation Serif" fill="none">
                <g stroke="#fff" shape-rendering="crispEdges">
                    <path d="M344.500 217V330M746.500 216V364M344 237.500H746M488 351.500H746M344 306.500H490M510.500 367V386M562.500 367V386M510 377.500H562"/>
                </g>
                <path d="M490 306L521 351M344 261L333 268H356L344 276M746 283L735 290H758L746 297M501 386L518 370M553 386L569 370M505 351C505 345 508 341 513 339" stroke="#fff"/>
                <circle cx="495" cy="327" r="2.500" stroke="#fff"/>
                <path d="M561.500 214V351" stroke="#b4222a" stroke-dasharray="28 3" shape-rendering="crispEdges"/>
                <text x="464" y="348" fill="#22dd22" font-size="25">45</text>
                <text x="541" y="412" fill="#22dd22" font-size="28">0</text>
                <text x="566" y="412" fill="#fff" font-size="24" textLength="26" lengthAdjust="spacingAndGlyphs">mm</text>
            </svg>
            <p class="ml-[3px] mt-[3px] flex items-center text-[26px] leading-[36px] font-light text-[#eee] whitespace-nowrap font-['Noto_Sans_CJK_SC',sans-serif]"><span>说明</span><span class="w-[13px] text-center">:</span><span>红色线为所绘制的筏板图元交线。</span></p>
        </div>
        <div class="flex-1 flex items-start justify-end pt-[11px] pr-3 font-['Noto_Sans_CJK_SC',sans-serif]">
            <button class="w-[71px] h-[23px] flex items-center justify-center border-2 border-[#0a64ad] bg-[#e1e1e1]">确定</button>
            <button class="ml-[9px] w-[72px] h-[23px] flex items-center justify-center border border-[#adadad] bg-[#e1e1e1]">取消</button>
        </div>
    </div>
</div>
</body>
</html>
